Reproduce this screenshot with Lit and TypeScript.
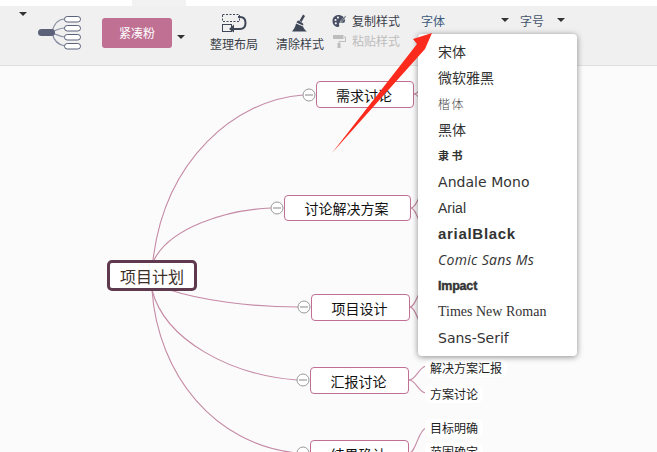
import { LitElement, html, css, svg } from "lit";
import { customElement } from "lit/decorators.js";

const nodes = [
  { t: "需求讨论", x: 316, y: 81, w: 98, h: 27, cx: 309, cy: 95 },
  { t: "讨论解决方案", x: 284, y: 195, w: 127, h: 26, cx: 277, cy: 208 },
  { t: "项目设计", x: 311, y: 294, w: 99, h: 27, cx: 304, cy: 307 },
  { t: "汇报讨论", x: 310, y: 367, w: 99, h: 27, cx: 303, cy: 380 },
  { t: "结果确认", x: 310, y: 440, w: 99, h: 27, cx: 303, cy: 453 },
];
const leaves = [
  { t: "解决方案汇报", x: 425, y: 359 },
  { t: "方案讨论", x: 425, y: 385 },
  { t: "目标明确", x: 425, y: 419 },
  { t: "范围确定", x: 425, y: 443 },
];
const curves = [
  "M153 260C165 160 235 100 303 95",
  "M154 260C170 228 225 210 271 208",
  "M170 290C200 300 250 307 298 307",
  "M152 290C165 340 230 375 297 380",
  "M152 290C158 375 215 445 297 453",
  "M414 94C418 94 420 88 426 84",
  "M414 94C418 94 420 100 426 106",
  "M411 208C416 208 418 196 426 186",
  "M411 208C416 208 418 222 426 236",
  "M410 307C415 307 417 294 426 282",
  "M410 307C415 307 417 320 426 334",
  "M409 380C416 380 418 368 426 366",
  "M409 380C416 380 418 392 426 393",
  "M409 453C416 453 418 430 426 428",
];
const fonts: [string, string][] = [
  ["宋体", "f-song"],
  ["微软雅黑", "f-yahei"],
  ["楷体", "f-kai"],
  ["黑体", "f-hei"],
  ["隶书", "f-li"],
  ["Andale Mono", "f-andale"],
  ["Arial", "f-arial"],
  ["arialBlack", "f-black"],
  ["Comic Sans Ms", "f-comic"],
  ["Impact", "f-impact"],
  ["Times New Roman", "f-times"],
  ["Sans-Serif", "f-sans"],
];

@customElement("app-root")
export class AppRoot extends LitElement {
  static styles = css`
    :host {
      display: block;
      position: relative;
      width: 657px;
      height: 452px;
      overflow: hidden;
      background: #fff;
      font-family: "Noto Sans CJK SC", "Liberation Sans", sans-serif;
      color: #333;
    }
    .strip { height: 6px; display: flex; background: #fff; }
    .tab { margin-left: 132px; width: 54px; background: #f2f2f2; }
    .toolbar {
      height: 59px;
      display: flex;
      align-items: flex-start;
      background: #f0f0f0;
      border-bottom: 1px solid #e0e0e0;
    }
    .caret {
      width: 0;
      height: 0;
      flex: none;
      border-left: 4px solid transparent;
      border-right: 4px solid transparent;
      border-top: 4px solid #333;
    }
    .c1 { margin: 6px 0 0 19px; }
    .theme { margin: 9px 0 0 11px; flex: none; }
    .pill {
      margin: 12px 0 0 20px;
      width: 70px;
      height: 30px;
      flex: none;
      border-radius: 3px;
      background: #bf7093;
      color: #fff;
      font-size: 12px;
      line-height: 29px;
      text-align: center;
    }
    .c2 { margin: 29px 0 0 5px; }
    .big {
      width: 48px;
      flex: none;
      display: flex;
      flex-direction: column;
      align-items: center;
      font-size: 12px;
      line-height: 16px;
      color: #3a3f4a;
      white-space: nowrap;
    }
    .arrange { margin: 7px 0 0 25px; }
    .clean { margin: 7px 0 0 18px; }
    .big svg { display: block; margin-bottom: 3px; }
    .pair {
      margin: 7px 0 0 8px;
      width: 68px;
      flex: none;
      display: flex;
      flex-direction: column;
      gap: 4px;
      font-size: 12px;
      line-height: 16px;
      color: #3a3f4a;
    }
    .pair div { display: flex; align-items: center; gap: 6px; white-space: nowrap; height: 16px; }
    .pair .off { color: #bdbdbd; }
    .sel {
      margin: 2px 0 0 16px;
      height: 24px;
      width: 98px;
      flex: none;
      display: flex;
      align-items: center;
      justify-content: space-between;
      box-sizing: border-box;
      padding: 0 5px;
      font-size: 12px;
      color: #3c5a7c;
    }
    .sel.size { margin-left: 1px; width: 55px; color: #44546a; padding-right: 5px; }
    .canvas {
      position: absolute;
      left: 0;
      top: 66px;
      width: 657px;
      height: 386px;
      background: #fbfbfb;
      overflow: hidden;
    }
    .lines { position: absolute; left: 0; top: 0; }
    .node {
      position: absolute;
      box-sizing: border-box;
      background: #fff;
      border: 1px solid #bf7093;
      border-radius: 4px;
      padding-right: 2px;
      font-size: 14px;
      color: #111;
      display: flex;
      align-items: center;
      justify-content: center;
      white-space: nowrap;
    }
    .root {
      position: absolute;
      left: 107px;
      top: 194px;
      width: 90px;
      height: 31px;
      box-sizing: border-box;
      border: 3px solid #5f3a4e;
      border-radius: 5px;
      background: #fff;
      color: #3d2f28;
      font-size: 16px;
      display: flex;
      align-items: center;
      justify-content: center;
    }
    .leaf {
      position: absolute;
      background: #fff;
      border-radius: 6px;
      padding: 0 5px;
      height: 18px;
      line-height: 18px;
      font-size: 12px;
      color: #222;
      white-space: nowrap;
    }
    .menu {
      position: absolute;
      left: 418px;
      top: 34px;
      width: 159px;
      height: 322px;
      box-sizing: border-box;
      padding: 5px 0;
      background: #fff;
      border-radius: 4px;
      box-shadow: 0 1px 6px rgba(0, 0, 0, 0.45);
    }
    .item {
      height: 26px;
      line-height: 26px;
      padding-left: 20px;
      font-size: 14px;
      color: #333;
      white-space: nowrap;
    }
    .f-song, .f-yahei, .f-hei { line-height: 24px; }
    .f-kai { font-size: 12px; font-weight: 300; letter-spacing: 1.5px; line-height: 25px; color: #444; }
    .f-li { font-size: 11px; font-weight: 700; letter-spacing: 2.500px; line-height: 25px; }
    .f-andale { font-family: "DejaVu Sans", sans-serif; letter-spacing: 0.05px; }
    .f-arial { font-family: "Liberation Sans", sans-serif; }
    .f-black { font-family: "Liberation Sans", sans-serif; font-weight: 700; font-size: 15px; letter-spacing: 0.7px; }
    .f-comic { font-family: "Open Sans", sans-serif; font-style: italic; font-size: 14px; letter-spacing: 0.3px; }
    .f-impact { font-family: "Liberation Sans", sans-serif; font-weight: 700; font-size: 12.5px; letter-spacing: -0.2px; -webkit-text-stroke: 0.4px #333; }
    .f-times { font-family: "Liberation Serif", serif; }
    .f-sans { font-family: "DejaVu Sans", sans-serif; font-size: 14px; }
    .arrow { position: absolute; left: 0; top: 0; pointer-events: none; }
  `;

  render() {
    return html`
      <div class="strip"><div class="tab"></div></div>
      <div class="toolbar">
        <div class="caret c1"></div>
        <svg class="theme" width="44" height="36" viewBox="38 15 44 36" fill="none">
          <path d="M52 32C54 24 58 19 65 19M52 32C56 30 60 28 65 28M52 33C56 34 60 37 65 37M52 33C54 41 58 45 65 46" stroke="#8a8fa3" stroke-width="1.2"/>
          <rect x="38" y="29" width="17" height="7" rx="3.5" fill="#5a6178"/>
          ${[16, 25, 34, 43].map(
            (y) => svg`<rect x="64.5" y=${y + 0.5} width="16" height="5.5" rx="2.7" fill="#fff" stroke="#5a6178"/>`
          )}
        </svg>
        <div class="pill">紧凑粉</div>
        <div class="caret c2"></div>
        <div class="big arrange">
          <svg width="26" height="20" viewBox="0 0 26 20" fill="none">
            <rect x="1.5" y="1.5" width="17" height="7" stroke="#3f4658" stroke-dasharray="2 1.5"/>
            <path d="M17 4H19C23 4 24.500 7 24.500 10C24.500 14 22 16 19 16H9" stroke="#3f4658" stroke-width="2"/>
            <path d="M13 11.500L8 16L13 19.500Z" fill="#3f4658"/>
            <rect x="1.500" y="11.500" width="9" height="7" stroke="#3f4658"/>
          </svg>
          <span>整理布局</span>
        </div>
        <div class="big clean">
          <svg width="20" height="20" viewBox="0 0 20 20">
            <path d="M13 1.500L15 3L11.500 9L9.500 7.800Z" fill="#3f4658"/>
            <path d="M8.500 7.500L12.500 10C13.500 11 13.500 12 13 12.500L6.500 9.500C7 8.500 7.500 7.800 8.500 7.500Z" fill="#3f4658"/>
            <path d="M6 10.500L13 13.500C14 16 15.500 17.500 17 18.500H2C3.500 16.500 5.500 14 6 10.500Z" fill="#3f4658"/>
          </svg>
          <span>清除样式</span>
        </div>
        <div class="pair">
          <div>
            <svg width="14" height="14" viewBox="0 0 14 14">
              <path d="M6.500 1C3 1 .5 3.500 .5 7C.5 10.500 3 13 6 13C7.500 13 7.500 11.500 7 10.500C6.500 9.500 7.500 8.800 9 8.800H11C12.500 8.800 13 8 13 6.500C13 3.500 10 1 6.500 1Z" fill="#4a5064"/>
              <circle cx="3.500" cy="6" r="1.100" fill="#f0f0f0"/>
              <circle cx="6" cy="3.600" r="1.100" fill="#f0f0f0"/>
              <circle cx="3.800" cy="9.300" r="1.100" fill="#f0f0f0"/>
              <path d="M13.500 1.500L9 6.500L8 8.500L10.300 7.500L14 2.500Z" fill="#4a5064" stroke="#f0f0f0" stroke-width=".5"/>
            </svg>
            <span>复制样式</span>
          </div>
          <div class="off">
            <svg width="14" height="14" viewBox="0 0 14 14">
              <rect x="1" y="1" width="10.500" height="4" fill="#bdbdbd"/>
              <path d="M12 3H13.500V7.500H7V9" fill="none" stroke="#bdbdbd"/>
              <rect x="5.500" y="9" width="3" height="5" fill="#bdbdbd"/>
            </svg>
            <span>粘贴样式</span>
          </div>
        </div>
        <div class="sel"><span>字体</span><div class="caret"></div></div>
        <div class="sel size"><span>字号</span><div class="caret"></div></div>
      </div>
      <div class="canvas">
        <svg class="lines" width="657" height="386" viewBox="0 66 657 386" fill="none">
          ${curves.map((d) => svg`<path d=${d} stroke="#c58aa5" stroke-width="1.1"/>`)}
          ${nodes.map(
            (n) => svg`
              <circle cx=${n.cx} cy=${n.cy} r="6" fill="#fff" stroke="#999" stroke-width="1"/>
              <path d="M${n.cx - 4} ${n.cy}H${n.cx + 4}" stroke="#888" stroke-width="1"/>`
          )}
        </svg>
        ${nodes.map(
          (n) => html`<div class="node" style="left:${n.x}px;top:${n.y - 66}px;width:${n.w}px;height:${n.h}px">${n.t}</div>`
        )}
        ${leaves.map((l) => html`<div class="leaf" style="left:${l.x}px;top:${l.y - 66}px">${l.t}</div>`)}
        <div class="root">项目计划</div>
      </div>
      <div class="menu">
        ${fonts.map(([t, c]) => html`<div class="item ${c}">${t}</div>`)}
      </div>
      <svg class="arrow" width="657" height="452" viewBox="0 0 657 452">
        <path d="M432 33L413 39L417 44L332 153L425 49Z" fill="#fb2a1c"/>
      </svg>
    `;
  }
}
